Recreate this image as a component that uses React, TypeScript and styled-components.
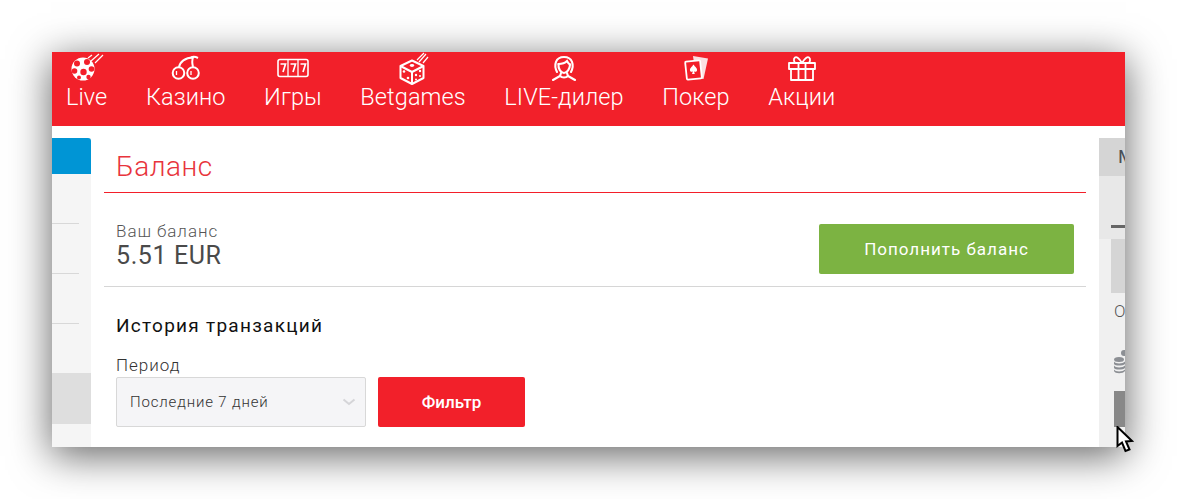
import React from 'react';
import styled, { createGlobalStyle } from 'styled-components';

const GlobalStyle = createGlobalStyle`
  html, body {
    margin: 0;
    padding: 0;
    background: #fff;
    font-family: Roboto, "Liberation Sans", sans-serif;
  }
  * { box-sizing: border-box; }
`;

const IconSoccer = () => (
  <svg width="36" height="30" viewBox="0 0 36 30">
    <circle cx="14" cy="17" r="11.5" fill="#fff" />
    <circle cx="14.5" cy="20" r="3.2" fill="#f31f2a" />
    <circle cx="8" cy="11.5" r="3" fill="#f31f2a" />
    <circle cx="18" cy="10" r="3" fill="#f31f2a" />
    <circle cx="22.5" cy="17" r="2.8" fill="#f31f2a" />
    <circle cx="5.5" cy="19" r="2.8" fill="#f31f2a" />
    <circle cx="19.5" cy="25" r="2.2" fill="#f31f2a" />
    <circle cx="10" cy="25.5" r="2" fill="#f31f2a" />
    <path d="M19 6 L23 3 M22 9 L30 2 M26 11 L34 3" stroke="#fff" strokeWidth="1.2" fill="none" />
  </svg>
);

const IconCherry = () => (
  <svg width="30" height="30" viewBox="0 0 30 30">
    <g fill="none" stroke="#fff" strokeWidth="2">
      <circle cx="7.5" cy="21" r="5.8" />
      <circle cx="22" cy="21" r="5.8" />
      <path d="M8 15 C9 10 14 5.5 22 5.5 C21 8 21 11 22 15" />
      <path d="M20 5.5 C22 4.5 25 5 27 6" />
      <path d="M5.5 19 V23 M20 19 V23" strokeWidth="1.3" />
    </g>
  </svg>
);

const IconSlots = () => (
  <svg width="32" height="30" viewBox="0 0 32 30">
    <g fill="none" stroke="#fff">
      <rect x="1" y="7.5" width="30" height="17" rx="2" strokeWidth="1.6" />
      <path d="M11 7.5 V24.5 M21 7.5 V24.5" strokeWidth="1.3" />
      <path d="M3.5 12 H8.5 L6 20 M13.5 12 H18.5 L16 20 M23.5 12 H28.5 L26 20" strokeWidth="1.7" />
    </g>
  </svg>
);

const IconDice = () => (
  <svg width="36" height="33" viewBox="0 0 36 33">
    <g fill="none" stroke="#fff" strokeWidth="2" strokeLinejoin="round">
      <path d="M17 8.5 L28.5 14 V26 L17 32 L5.5 26 V14 Z" />
      <path d="M5.5 14 L17 20 L28.5 14 M17 20 V32" />
    </g>
    <g fill="#fff">
      <ellipse cx="17" cy="13.5" rx="2.2" ry="1.4" />
      <circle cx="9" cy="19.5" r="1.3" />
      <circle cx="13" cy="26" r="1.3" />
      <circle cx="21" cy="23" r="1.2" />
      <circle cx="25" cy="19" r="1.2" />
      <circle cx="21" cy="27.5" r="1" />
      <circle cx="25" cy="24" r="1" />
    </g>
    <path d="M22 8 L29 1 M24 10 L31 2 M28 11 L33 5" stroke="#fff" strokeWidth="1.2" fill="none" />
  </svg>
);

const IconDealer = () => (
  <svg width="28" height="30" viewBox="0 0 28 30">
    <g fill="none" stroke="#fff" strokeWidth="2.1" strokeLinecap="round">
      <path d="M7 20 C3.5 13 5.5 5 14 5 C22.5 5 24.5 13 21 20" />
      <path d="M8.5 12 C12 12 15 11 17 9 C18 11 19 12 20 12.5" />
      <path d="M8.5 12 C8 17 11 21 14 21 C17 21 20 17 20 12.5" />
      <path d="M11 21 L10 24 L3 28 M17 21 L18 24 L25 28" />
      <path d="M10 24 C12 26 16 26 18 24" />
    </g>
  </svg>
);

const IconCards = () => (
  <svg width="28" height="30" viewBox="0 0 28 30">
    <path d="M11 4 L26 6.5 L21.5 27 L14 26 Z" fill="#fbdfe1" />
    <rect x="4" y="9" width="15" height="18" rx="1" fill="#f31f2a" stroke="#fff" strokeWidth="1.8" transform="rotate(-6 11.5 18)" />
    <path d="M11.5 12.5 C13 15 15.5 16 15 18.5 C14.7 20 13 20.2 12 19.2 L12.8 22 H10 L11 19.2 C10 20.2 8.3 20 8 18.5 C7.6 16 10 15 11.5 12.5 Z" fill="#fff" />
  </svg>
);

const IconGift = () => (
  <svg width="28" height="30" viewBox="0 0 28 30">
    <g fill="none" stroke="#fff" strokeWidth="1.8" strokeLinejoin="round">
      <rect x="1" y="11" width="26" height="6" />
      <rect x="3" y="17" width="22" height="11" />
      <path d="M10.5 11 V28 M17.5 11 V28" />
      <path d="M14 11 C11 6 8.5 4.5 7 5.5 C5 7 6 11 8 11 M14 11 C17 6 19.5 4.5 21 5.5 C23 7 22 11 20 11" />
    </g>
  </svg>
);

const navItems = [
  { label: 'Live', icon: <IconSoccer /> },
  { label: 'Казино', icon: <IconCherry /> },
  { label: 'Игры', icon: <IconSlots /> },
  { label: 'Betgames', icon: <IconDice /> },
  { label: 'LIVE-дилер', icon: <IconDealer /> },
  { label: 'Покер', icon: <IconCards /> },
  { label: 'Акции', icon: <IconGift /> },
];

const App: React.FC = () => {
  return (
    <>
      <GlobalStyle />
      <Page>
        <Stage>
          <Window>
            <NavBar>
              {navItems.map((item) => (
                <NavItem key={item.label}>
                  <NavIcon>{item.icon}</NavIcon>
                  <NavLabel>{item.label}</NavLabel>
                </NavItem>
              ))}
            </NavBar>
            <Columns>
              <LeftColumn>
                <BlueHead />
                <LeftRow />
                <LeftRow />
                <LeftRow />
                <LeftRow $plain />
                <LeftRow $active />
              </LeftColumn>
              <Main>
                <Title>Баланс</Title>
                <BalanceRow>
                  <div>
                    <BalanceLabel>Ваш баланс</BalanceLabel>
                    <BalanceValue>5.51 EUR</BalanceValue>
                  </div>
                  <DepositButton>Пополнить баланс</DepositButton>
                </BalanceRow>
                <Section>
                  <SectionTitle>История транзакций</SectionTitle>
                  <FieldLabel>Период</FieldLabel>
                  <FilterRow>
                    <SelectBox>
                      <span>Последние 7 дней</span>
                      <svg width="14" height="8" viewBox="0 0 14 8">
                        <path d="M1.5 1.5 L7 6 L12.5 1.5" fill="none" stroke="#d5d5d8" strokeWidth="2" />
                      </svg>
                    </SelectBox>
                    <FilterButton>Фильтр</FilterButton>
                  </FilterRow>
                </Section>
              </Main>
              <RightColumn>
                <RightHead>М</RightHead>
                <RightTabs>
                  <RightDash />
                </RightTabs>
                <RightBody>
                  <RightBanner />
                  <RightLetter>О</RightLetter>
                  <CoinsIcon>
                    <svg width="11" height="24" viewBox="0 0 11 24">
                      <circle cx="10" cy="3" r="3" fill="#8c8f94" />
                      <g fill="#8c8f94">
                        <ellipse cx="5" cy="9.5" rx="5" ry="2.5" />
                        <path d="M0 11.5 C1 14 9 14 11 11.5 V14 C9 16 1 16 0 14 Z" />
                        <path d="M0 15.5 C1 18 9 18 11 15.5 V18 C9 20 1 20 0 18 Z" />
                        <path d="M0 19.5 C1 22 9 22 11 19.5 V21 C9 24 1 24 0 21 Z" />
                      </g>
                    </svg>
                  </CoinsIcon>
                  <RightButton />
                </RightBody>
              </RightColumn>
            </Columns>
          </Window>
          <Cursor>
            <svg width="18" height="27" viewBox="0 0 18 27">
              <path d="M1.5 1 L1.5 20 L6 16.5 L9.5 25 L13.5 23.5 L10 15.5 L16 15 Z" fill="#fff" stroke="#000" strokeWidth="2" strokeLinejoin="miter" />
            </svg>
          </Cursor>
        </Stage>
      </Page>
    </>
  );
};

const Page = styled.div`
  width: 1177px;
  height: 499px;
  padding: 52px;
  overflow: hidden;
  background: #fff;
`;

const Stage = styled.div`
  position: relative;
  width: 1073px;
  height: 395px;
`;

const Window = styled.div`
  width: 1073px;
  height: 395px;
  overflow: hidden;
  display: flex;
  flex-direction: column;
  background: #fff;
  box-shadow: 0 8px 38px 1px rgba(0, 0, 0, 0.6);
`;

const NavBar = styled.nav`
  height: 74px;
  flex: none;
  background: #f2202a;
  display: flex;
  gap: 38.5px;
  padding-left: 14px;
`;

const NavItem = styled.div`
  display: flex;
  flex-direction: column;
  align-items: center;
  color: #fff;
`;

const NavIcon = styled.div`
  height: 30px;
  display: flex;
  align-items: flex-start;
  justify-content: center;
`;

const NavLabel = styled.span`
  font-size: 23.5px;
  font-weight: 300;
  line-height: 30px;
  letter-spacing: 0.1px;
`;

const Columns = styled.div`
  flex: 1;
  display: flex;
  min-height: 0;
`;

const LeftColumn = styled.aside`
  width: 39px;
  flex: none;
  margin-top: 12px;
  background: #f5f5f5;
`;

const BlueHead = styled.div`
  height: 36px;
  background: #0095d5;
  border-top-right-radius: 3px;
`;

const LeftRow = styled.div<{ $active?: boolean; $plain?: boolean }>`
  height: ${(p) => (p.$active ? '51px' : p.$plain ? '49px' : '50px')};
  margin-right: ${(p) => (p.$active ? '0' : '12px')};
  background: ${(p) => (p.$active ? '#dedede' : 'transparent')};
  border-bottom: ${(p) => (p.$active || p.$plain ? '0' : '1px solid #d8d8d8')};
`;

const Main = styled.main`
  flex: 1;
  padding: 0 13px;
  min-width: 0;
`;

const Title = styled.h1`
  margin: 0;
  height: 67px;
  padding: 23px 12px 0;
  font-size: 28px;
  line-height: 35px;
  font-weight: 300;
  letter-spacing: 0.55px;
  color: #e8343c;
  border-bottom: 1px solid #f31f2a;
`;

const BalanceRow = styled.div`
  height: 94px;
  padding: 0 12px;
  display: flex;
  align-items: flex-start;
  justify-content: space-between;
  border-bottom: 1px solid #d6d6d6;

  > div {
    padding-top: 28px;
  }
`;

const BalanceLabel = styled.div`
  font-size: 17px;
  line-height: 20px;
  font-weight: 300;
  letter-spacing: 0.95px;
  color: #555;
`;

const BalanceValue = styled.div`
  margin-top: 1px;
  font-size: 25px;
  line-height: 28px;
  letter-spacing: 0.6px;
  color: #4a4a4a;
`;

const DepositButton = styled.button`
  width: 255px;
  height: 50px;
  margin-top: 31px;
  border: 0;
  border-radius: 2px;
  background: #7cb342;
  color: #fff;
  font: 400 17px Roboto, sans-serif;
  letter-spacing: 1px;
`;

const Section = styled.section`
  padding: 27px 12px 0;
`;

const SectionTitle = styled.h2`
  margin: 0;
  font-size: 19px;
  line-height: 24px;
  font-weight: 400;
  letter-spacing: 1.27px;
  color: #111;
`;

const FieldLabel = styled.div`
  margin-top: 17px;
  font-size: 17px;
  line-height: 21px;
  font-weight: 300;
  letter-spacing: 1px;
  color: #333;
`;

const FilterRow = styled.div`
  display: flex;
  gap: 12px;
  margin-top: 1px;
`;

const SelectBox = styled.div`
  width: 250px;
  height: 50px;
  padding: 0 9px 0 13px;
  display: flex;
  align-items: center;
  justify-content: space-between;
  background: #f5f5f7;
  border: 1px solid #d8d8d8;
  border-radius: 2px;
  font-size: 15px;
  font-weight: 300;
  letter-spacing: 0.85px;
  color: #333;
`;

const FilterButton = styled.button`
  width: 147px;
  height: 50px;
  border: 0;
  border-radius: 2px;
  background: #f2202a;
  color: #fff;
  font: 500 17px Roboto, sans-serif;
`;

const RightColumn = styled.aside`
  width: 26px;
  flex: none;
  margin-top: 12px;
  background: #f0f0f0;
  overflow: hidden;
`;

const RightHead = styled.div`
  height: 38px;
  padding-left: 19px;
  background: #d5d5d5;
  font-size: 19px;
  line-height: 38px;
  color: #4a4f57;
  white-space: nowrap;
`;

const RightTabs = styled.div`
  height: 63px;
  padding: 49px 0 0 12px;
  background: #e8e8e8;
`;

const RightDash = styled.div`
  height: 3px;
  background: #666;
`;

const RightBody = styled.div`
  padding-left: 12px;
`;

const RightBanner = styled.div`
  height: 54px;
  background: #d5d5d5;
`;

const RightLetter = styled.div`
  margin: 9px 0 0 3px;
  font-size: 17px;
  line-height: 19px;
  font-weight: 300;
  color: #555;
`;

const CoinsIcon = styled.div`
  height: 24px;
  margin: 29px 0 0 3px;
  line-height: 0;
`;

const RightButton = styled.div`
  height: 36px;
  margin: 17px 0 0 3px;
  background: #888;
`;

const Cursor = styled.div`
  position: absolute;
  left: 1064px;
  top: 374px;
  line-height: 0;
`;

export default App;
